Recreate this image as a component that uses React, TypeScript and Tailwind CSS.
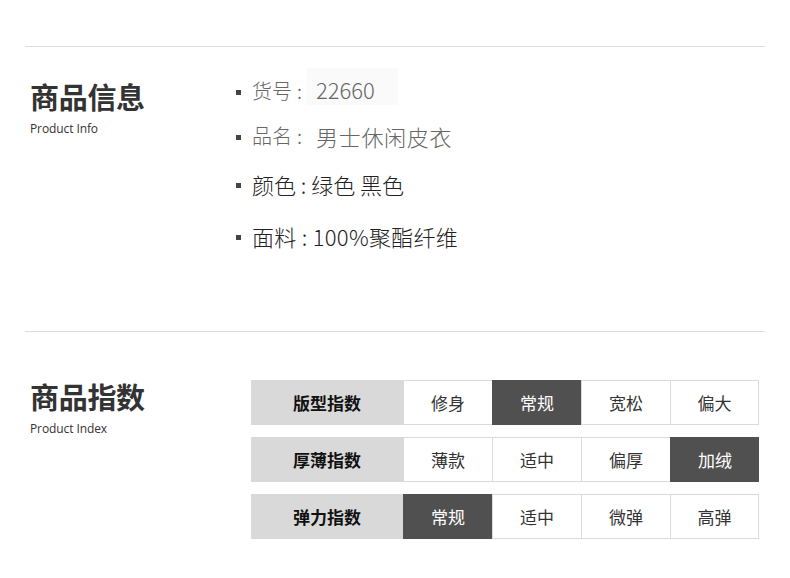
import React from "react";

const cjk = { fontFamily: '"Noto Sans CJK SC", "Noto Sans", sans-serif' };

type IndexRow = { label: string; options: string[]; active: number };

const indexRows: IndexRow[] = [
    { label: "版型指数", options: ["修身", "常规", "宽松", "偏大"], active: 1 },
    { label: "厚薄指数", options: ["薄款", "适中", "偏厚", "加绒"], active: 3 },
    { label: "弹力指数", options: ["常规", "适中", "微弹", "高弹"], active: 0 },
];

function SectionTitle({ title, sub }: { title: string; sub: string }) {
    return (
        <div className="w-[211px] shrink-0 pl-[5px]">
            <h2 className="text-[29px] leading-[36px] font-bold text-[#333] tracking-[-0.3px]">{title}</h2>
            <p className="mt-[8px] text-[12px] leading-[14px] text-[#333] tracking-[-0.1px]" style={{ fontFamily: '"Open Sans", "Liberation Sans", sans-serif' }}>{sub}</p>
        </div>
    );
}

function Bullet() {
    return <span className="w-[5px] h-[5px] mt-[3px] bg-[#444] mr-[11px] shrink-0" />;
}

function GreyLabel({ text }: { text: string }) {
    return (
        <span className="w-[64px] shrink-0 flex items-center text-[20px]">
            {text}
            <span className="ml-[5px]">:</span>
        </span>
    );
}

export default function App() {
    return (
        <div className="w-[790px] h-[578px] bg-white px-[25px] overflow-hidden" style={cjk}>
            <section className="mt-[46px] h-[285px] border-t border-[#dcdcdc] flex">
                <div className="pt-[31px]">
                    <SectionTitle title="商品信息" sub="Product Info" />
                </div>
                <ul className="pt-[24px] flex flex-col">
                    <li className="h-[40px] flex items-center font-light text-[#666]">
                        <Bullet />
                        <GreyLabel text="货号" />
                        <span className="bg-[#fafafa] h-[37px] w-[91px] -ml-[9px] pl-[9px] mb-[10px] pt-[6px] leading-[30px] text-[22px]">22660</span>
                    </li>
                    <li className="h-[40px] mt-[5px] flex items-center font-light text-[#666]">
                        <Bullet />
                        <GreyLabel text="品名" />
                        <span className="text-[22px] tracking-[0.7px]">男士休闲皮衣</span>
                    </li>
                    <li className="h-[40px] mt-[8px] flex items-center text-[22px] font-light text-[#222]">
                        <Bullet />
                        <span>颜色 : 绿色 黑色</span>
                    </li>
                    <li className="h-[40px] mt-[12px] flex items-center text-[22px] font-light text-[#222]">
                        <Bullet />
                        <span className="tracking-[0.3px]">面料 : 100%聚酯纤维</span>
                    </li>
                </ul>
            </section>
            <section className="border-t border-[#dcdcdc] flex pt-[48px]">
                <div className="-mt-[2px]">
                    <SectionTitle title="商品指数" sub="Product Index" />
                </div>
                <div className="ml-[15px] flex flex-col gap-[12px]">
                    {indexRows.map((row) => (
                        <div key={row.label} className="flex h-[45px]">
                            <div className="w-[152px] bg-[#d9d9d9] flex items-center justify-center text-[17px] font-bold text-[#111]">
                                {row.label}
                            </div>
                            {row.options.map((opt, i) => (
                                <div
                                    key={opt + i}
                                    className={
                                        i === row.active
                                            ? "w-[89px] bg-[#505050] border-y border-l border-[#505050] flex items-center justify-center text-[17px] text-white"
                                            : "w-[89px] bg-white border-y border-l border-[#dadada] last:border-r flex items-center justify-center text-[17px] text-[#333]"
                                    }
                                >
                                    {opt}
                                </div>
                            ))}
                        </div>
                    ))}
                </div>
            </section>
        </div>
    );
}
